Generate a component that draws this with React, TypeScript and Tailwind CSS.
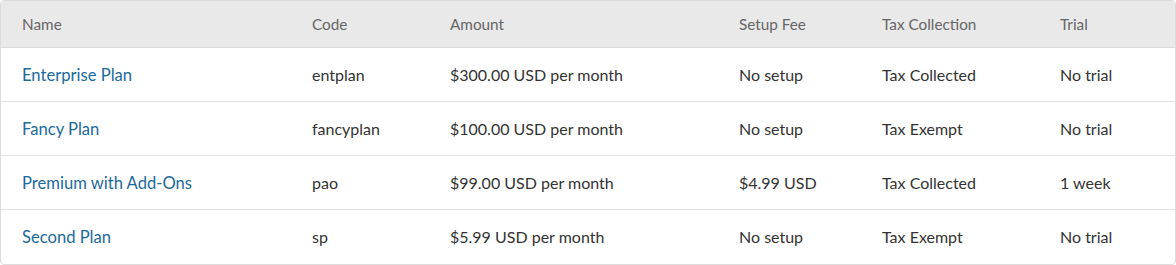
import React from "react";

const rows = [
  ["Enterprise Plan", "entplan", "$300.00 USD per month", "No setup", "Tax Collected", "No trial"],
  ["Fancy Plan", "fancyplan", "$100.00 USD per month", "No setup", "Tax Exempt", "No trial"],
  ["Premium with Add-Ons", "pao", "$99.00 USD per month", "$4.99 USD", "Tax Collected", "1 week"],
  ["Second Plan", "sp", "$5.99 USD per month", "No setup", "Tax Exempt", "No trial"],
];

const heads = ["Name", "Code", "Amount", "Setup Fee", "Tax Collection", "Trial"];
const widths = ["w-[290px]", "w-[138px]", "w-[289px]", "w-[143px]", "w-[178px]", ""];

export default function App() {
  return (
    <div className="w-[1176px] h-[265px] bg-white font-['Lato','Liberation_Sans',sans-serif]">
      <div className="w-[1176px] h-[265px] border border-[#dcdcdc] rounded-[4px] overflow-hidden">
        <div className="flex h-[47px] items-center bg-[#e9e9e9] border-b border-[#d9d9d9] text-[15.3px] text-[#666]">
          {heads.map((h, i) => (
            <div key={h} className={`${widths[i]} ${i === 5 ? "flex-1" : ""} pl-[21px]`}>{h}</div>
          ))}
        </div>
        {rows.map((r, ri) => (
          <div
            key={ri}
            className={`flex h-[54px] items-center text-[16px] text-[#333] ${ri < 3 ? "border-b border-[#e3e3e3]" : ""}`}
          >
            {r.map((c, i) => (
              <div
                key={i}
                className={`${widths[i]} ${i === 5 ? "flex-1" : ""} pl-[21px] leading-[24px] ${i === 0 ? "text-[#1b6a9c] text-[16.6px]" : ""}`}
              >
                {c}
              </div>
            ))}
          </div>
        ))}
      </div>
    </div>
  );
}
